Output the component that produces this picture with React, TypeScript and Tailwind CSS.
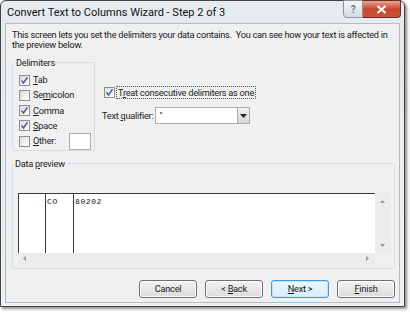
import React from 'react'

function Check({ checked }: { checked?: boolean }) {
  return (
    <span className="inline-flex h-[11px] w-[11px] shrink-0 items-center justify-center border border-[#8e8f8f] bg-gradient-to-br from-[#dcdcdc] to-[#ffffff]">
      {checked && (
        <svg width="9" height="9" viewBox="0 0 9 9">
          <path d="M1.5 4.5 L3.5 7 L7.5 1.2" fill="none" stroke="#4a5f97" strokeWidth="1.5" />
        </svg>
      )}
    </span>
  )
}

function U({ children }: { children: React.ReactNode }) {
  return <span className="underline underline-offset-1">{children}</span>
}

function Btn({ children, primary }: { children: React.ReactNode; primary?: boolean }) {
  return (
    <button
      className={`h-[18px] w-[58px] rounded-[3px] border leading-none text-[#1a1a1a] ${
        primary
          ? 'border-[#3c9bd6] bg-gradient-to-b from-[#eaf6fd] to-[#d9eefa] shadow-[inset_0_0_0_1px_#c4e5f6]'
          : 'border-[#707070] bg-gradient-to-b from-[#f2f2f2] to-[#dcdcdc] shadow-[inset_0_0_0_1px_#fcfcfc]'
      }`}
    >
      {children}
    </button>
  )
}

export default function App() {
  return (
    <div className="h-[314px] w-[410px] bg-white font-['Roboto',sans-serif] text-[9.2px] tracking-[-0.25px] text-[#1a1a1a]">
      <div className="flex h-[307px] w-[405px] flex-col rounded-t-[6px] border border-[#444] bg-gradient-to-b from-[#e6ebf0] to-[#eef1f4] shadow-[2px_2px_3px_rgba(0,0,0,0.45)]">
        {/* title bar */}
        <div className="relative flex h-[22px] shrink-0 items-center pl-[6px]">
          <span className="text-[11px] leading-none tracking-normal text-[#111]">
            Convert Text to Columns Wizard - Step 2 of 3
          </span>
          <div className="absolute right-[3px] top-[-1px] flex">
            <div className="flex h-[18px] w-[20px] items-center justify-center rounded-bl-[4px] border border-[#8a95a3] bg-gradient-to-b from-[#f3f5f8] to-[#d5dce5] text-[10px] font-bold text-[#6a7585]">
              ?
            </div>
            <div className="flex h-[18px] w-[38px] items-center justify-center rounded-br-[4px] border border-l-0 border-[#6b2b20] bg-gradient-to-b from-[#e8a493] via-[#c9452c] to-[#c8543d]">
              <svg width="11" height="9" viewBox="0 0 11 9">
                <path d="M1.5 1 L9.5 8 M9.5 1 L1.5 8" stroke="#fff" strokeWidth="2.2" />
              </svg>
            </div>
          </div>
        </div>
        {/* client area */}
        <div className="mx-[4px] mb-[3px] flex flex-1 flex-col border border-[#b4bcc6] bg-[#f0f0f0] pl-[6px] pr-[4px]">
          <p className="mt-[5.5px] whitespace-nowrap leading-[10.5px]">
            This screen lets you set the delimiters your data contains.&nbsp; You can see how your text is affected in
            <br />
            the preview below.
          </p>
          <div className="mt-[6px] flex">
            <fieldset className="h-[94px] w-[83px] shrink-0 rounded-[3px] border border-[#d5dfe5] pl-[6px]">
              <legend className="ml-[-4px] px-[1px] leading-[12px]">Delimiters</legend>
              <div className="mt-[4px] flex flex-col">
                <label className="flex h-[15.25px] items-center gap-[3px]">
                  <Check checked />
                  <span><U>T</U>ab</span>
                </label>
                <label className="flex h-[15.25px] items-center gap-[3px]">
                  <Check />
                  <span>Se<U>m</U>icolon</span>
                </label>
                <label className="flex h-[15.25px] items-center gap-[3px]">
                  <Check checked />
                  <span><U>C</U>omma</span>
                </label>
                <label className="flex h-[15.25px] items-center gap-[3px]">
                  <Check checked />
                  <span><U>S</U>pace</span>
                </label>
                <label className="flex h-[15.25px] items-center gap-[3px]">
                  <Check />
                  <span className="w-[33px]"><U>O</U>ther:</span>
                  <span className="h-[17px] w-[22px] shrink-0 border border-[#abadb3] bg-white" />
                </label>
              </div>
            </fieldset>
            <div className="ml-[9px] mt-[29px] flex flex-col">
              <label className="flex h-[13px] items-center gap-[1px]">
                <Check checked />
                <span className="whitespace-nowrap border border-dotted border-[#555] px-[1px] leading-[11px]">
                  T<U>r</U>eat consecutive delimiters as one
                </span>
              </label>
              <div className="ml-[-2px] mt-[8.5px] flex items-center gap-[2px]">
                <span className="shrink-0 whitespace-nowrap">Text <U>q</U>ualifier:</span>
                <div className="flex h-[17px] w-[95px] items-center border border-[#abadb3] bg-white">
                  <span className="flex-1 pl-[3px] leading-none">"</span>
                  <span className="flex h-[15px] w-[12px] items-center justify-center border-l border-[#abadb3] bg-gradient-to-b from-[#f2f2f2] to-[#d6d6d6]">
                    <svg width="7" height="4" viewBox="0 0 7 4">
                      <path d="M0 0 H7 L3.5 4 Z" fill="#222" />
                    </svg>
                  </span>
                </div>
              </div>
            </div>
          </div>
          <fieldset className="mt-[7px] h-[111px] rounded-[3px] border border-[#d5dfe5] pl-[5px] pr-[4px]">
            <legend className="ml-[-4px] px-[1px] leading-[12px]">
              Data <U>p</U>review
            </legend>
            <div className="mt-[23px] flex">
              <div className="flex h-[60px] w-[357px] border-l border-t border-[#3b3b3b] bg-white font-['Liberation_Mono',monospace] text-[8px] leading-[12px] tracking-[0.6px] text-[#111]">
                <div className="w-[27px] border-r border-[#3b3b3b]" />
                <div className="w-[28px] border-r border-[#3b3b3b] pl-[1px] pt-[2px]">CO</div>
                <div className="flex-1 pl-[1px] pt-[2px]">80202</div>
              </div>
              <div className="flex h-[60px] w-[15px] flex-col items-center justify-between bg-[#ececec] pb-[6px] pt-[7px]">
                <svg width="5" height="3" viewBox="0 0 5 3">
                  <path d="M0 3 H5 L2.5 0 Z" fill="#9a9a9a" />
                </svg>
                <svg width="5" height="3" viewBox="0 0 5 3">
                  <path d="M0 0 H5 L2.5 3 Z" fill="#9a9a9a" />
                </svg>
              </div>
            </div>
            <div className="flex h-[11px] w-[357px] items-center justify-between bg-[#ececec] pl-[5px] pr-[6px]">
              <svg width="3" height="5" viewBox="0 0 3 5">
                <path d="M3 0 V5 L0 2.5 Z" fill="#9a9a9a" />
              </svg>
              <svg width="3" height="5" viewBox="0 0 3 5">
                <path d="M0 0 V5 L3 2.5 Z" fill="#9a9a9a" />
              </svg>
            </div>
          </fieldset>
          <div className="mt-[11px] flex justify-end gap-[8px]">
            <Btn>Cancel</Btn>
            <Btn>&lt; <U>B</U>ack</Btn>
            <Btn primary><U>N</U>ext &gt;</Btn>
            <Btn><U>F</U>inish</Btn>
          </div>
        </div>
      </div>
    </div>
  )
}
